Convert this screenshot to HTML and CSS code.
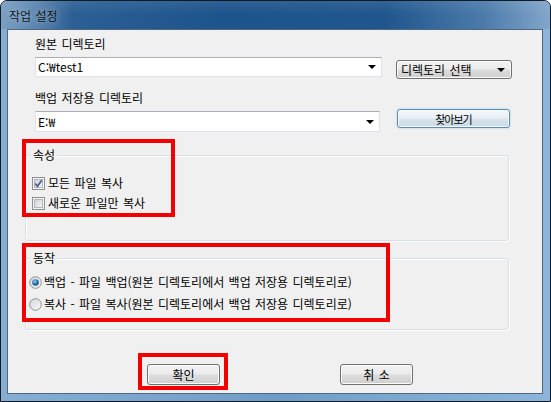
FILE: index.html
```html
<!DOCTYPE html>
<html lang="ko">
<head>
<meta charset="utf-8">
<title>작업 설정</title>
<link rel="stylesheet" href="styles.css">
</head>
<body>
<div class="window">
  <div class="titlebar"><span class="title">작업 설정</span></div>
  <div class="frame">
    <div class="client">
      <div class="label first">원본 디렉토리</div>
      <div class="row row1">
        <div class="combo combo1"><span class="value">C:₩test1</span><span class="arrow"></span></div>
        <div class="btn dropbtn"><span>디렉토리 선택</span><span class="arrow"></span></div>
      </div>
      <div class="label second">백업 저장용 디렉토리</div>
      <div class="row row2">
        <div class="combo combo2"><span class="value">E:₩</span><span class="arrow"></span></div>
        <div class="btn browse"><span class="tight">찾아보기</span></div>
      </div>

      <div class="group group1">
        <div class="legend">속성</div>
        <div class="checks">
          <div class="opt check">
            <svg width="13" height="13" viewBox="0 0 13 13">
              <defs><linearGradient id="cb1" x1="0" y1="0" x2="1" y2="1"><stop offset="0" stop-color="#cbcfd5"/><stop offset="1" stop-color="#f7f7f7"/></linearGradient></defs>
              <rect x="0.5" y="0.5" width="12" height="12" fill="#f5f5f5" stroke="#8e8f8f"/>
              <rect x="2.5" y="2.5" width="8" height="8" fill="url(#cb1)" stroke="#b0b5bb"/>
              <path d="M3.3 6.4 L5.4 9.2 L9.8 3.2" fill="none" stroke="#4a5f94" stroke-width="1.7"/>
            </svg>
            <span>모든 파일 복사</span>
          </div>
          <div class="opt check">
            <svg width="13" height="13" viewBox="0 0 13 13">
              <defs><linearGradient id="cb2" x1="0" y1="0" x2="1" y2="1"><stop offset="0" stop-color="#cbcfd5"/><stop offset="1" stop-color="#f7f7f7"/></linearGradient></defs>
              <rect x="0.5" y="0.5" width="12" height="12" fill="#f5f5f5" stroke="#8e8f8f"/>
              <rect x="2.5" y="2.5" width="8" height="8" fill="url(#cb2)" stroke="#b0b5bb"/>
            </svg>
            <span>새로운 파일만 복사</span>
          </div>
        </div>
      </div>

      <div class="group group2">
        <div class="legend">동작</div>
        <div class="radios">
          <div class="opt radio">
            <svg width="13" height="13" viewBox="0 0 13 13">
              <defs>
                <linearGradient id="rb1" x1="0" y1="0" x2="1" y2="1"><stop offset="0" stop-color="#d2d5d9"/><stop offset="1" stop-color="#fbfbfb"/></linearGradient>
                <radialGradient id="rd1" cx="0.4" cy="0.35" r="0.7"><stop offset="0" stop-color="#9fd6f8"/><stop offset="0.5" stop-color="#2f7ab8"/><stop offset="1" stop-color="#17487a"/></radialGradient>
              </defs>
              <circle cx="6.5" cy="6.5" r="5.8" fill="url(#rb1)" stroke="#8e8f8f"/>
              <circle cx="6.5" cy="6.5" r="3.3" fill="url(#rd1)"/>
            </svg>
            <span>백업 - 파일 백업(원본 디렉토리에서 백업 저장용 디렉토리로)</span>
          </div>
          <div class="opt radio">
            <svg width="13" height="13" viewBox="0 0 13 13">
              <defs><linearGradient id="rb2" x1="0" y1="0" x2="1" y2="1"><stop offset="0" stop-color="#d2d5d9"/><stop offset="1" stop-color="#fbfbfb"/></linearGradient></defs>
              <circle cx="6.5" cy="6.5" r="5.8" fill="url(#rb2)" stroke="#8e8f8f"/>
            </svg>
            <span>복사 - 파일 복사(원본 디렉토리에서 백업 저장용 디렉토리로)</span>
          </div>
        </div>
      </div>

      <div class="buttons">
        <div class="btn push ok">확인</div>
        <div class="btn push cancel">취 소</div>
      </div>

      <div class="mark mark1"></div>
      <div class="mark mark2"></div>
      <div class="mark mark3"></div>
    </div>
  </div>
</div>
</body>
</html>
```

FILE: styles.css
```css
* { box-sizing: border-box; }
html, body { margin: 0; padding: 0; }
body {
  width: 551px;
  height: 402px;
  overflow: hidden;
  background: #ffffff;
  font-family: "Noto Sans CJK KR", "Dotum", sans-serif;
  font-size: 12px;
  word-spacing: 1px;
  color: #000;
}
.window {
  width: 551px;
  height: 402px;
  border: 1px solid #111b26;
  border-radius: 7px 7px 0 0;
  overflow: hidden;
  display: flex;
  flex-direction: column;
  background: #7fa9cf;
}
.titlebar {
  height: 28px;
  flex: none;
  padding: 8px 0 0 8px;
  background:
    linear-gradient(180deg, rgba(255,255,255,0.08) 0%, rgba(255,255,255,0) 50%),
    linear-gradient(90deg, #7c9fc3 0%, #5d86b0 6%, #2c5f94 13%, #1d548c 40%, #20568d 70%, #4c7bab 88%, #82a6c9 100%);
}
.title {
  display: block;
  line-height: 14px;
  font-size: 12px;
  color: #101820;
  text-shadow: 0 0 6px rgba(255,255,255,0.55);
}
.frame {
  flex: 1;
  display: flex;
  padding: 0 7px 7px 6px;
  background: linear-gradient(90deg, #86aed3 0%, #6f9cc7 50%, #8db5d9 100%);
}
.client {
  position: relative;
  flex: 1;
  background: #f0f0f0;
  border: 1px solid #51697f;
}
.label {
  line-height: 14px;
  margin-left: 27px;
}
.label.first { margin-top: 7px; }
.label.second { margin-top: 12px; }
.row {
  display: flex;
  align-items: flex-start;
  margin-top: 6px;
  margin-left: 27px;
}
.combo {
  position: relative;
  display: flex;
  align-items: center;
  background: #fff;
  border: 1px solid #dfe3e8;
  border-top-color: #abadb3;
  padding-left: 2px;
}
.combo1 { width: 347px; height: 20px; }
.combo2 { width: 345px; height: 21px; }
.value { line-height: 14px; }
.arrow {
  margin-left: auto;
  width: 0;
  height: 0;
  border-left: 4px solid transparent;
  border-right: 4px solid transparent;
  border-top: 4px solid #000;
}
.combo .arrow { margin-right: 5px; }
.btn {
  display: flex;
  align-items: center;
  justify-content: center;
  border: 1px solid #707070;
  border-radius: 3px;
  box-shadow: inset 0 0 0 1px #fbfbfb;
  background: linear-gradient(180deg, #f2f2f2 0%, #ebebeb 48%, #dddddd 52%, #cfcfcf 100%);
  line-height: 14px;
}
.dropbtn {
  width: 116px;
  height: 19px;
  margin-left: 14px;
  margin-top: 3px;
  justify-content: flex-start;
  padding-left: 4px;
}
.dropbtn .arrow { margin-right: 6px; }
.browse {
  width: 113px;
  height: 19px;
  margin-left: 17px;
  margin-top: -2px;
  border-color: #5b8db6;
  box-shadow: inset 0 0 0 1px #f4f9fc, 0 0 2px rgba(120,190,230,0.7);
  background: linear-gradient(180deg, #f3f7fa 0%, #e9f0f5 48%, #d9e4ec 52%, #cbdae6 100%);
}
.tight { font-size: 11px; letter-spacing: -1px; }
.group {
  border: 1px solid #d5dfe5;
  border-radius: 3px;
  box-shadow: inset 1px 1px 0 #ffffff, 1px 1px 0 #ffffff;
  margin-left: 17px;
  width: 484px;
}
.group1 { margin-top: 23px; height: 86px; }
.group2 { margin-top: 17px; height: 72px; }
.legend {
  width: fit-content;
  margin: -8px 0 0 5px;
  padding: 0 2px;
  line-height: 14px;
  background: #f0f0f0;
}
.opt {
  display: flex;
  align-items: center;
  height: 20px;
}
.opt svg { flex: none; display: block; }
.checks { margin-top: 11px; padding-left: 6px; }
.check { gap: 3px; }
.radios { margin-top: 7px; padding-left: 3px; display: flex; flex-direction: column; gap: 2px; }
.radio { gap: 2px; }
.opt span { line-height: 14px; }
.buttons {
  display: flex;
  margin-top: 34px;
  margin-left: 139px;
}
.push {
  width: 73px;
  height: 21px;
}
.cancel { margin-left: 120px; }
.mark {
  position: absolute;
  border: 4px solid #f20000;
}
.mark1 { left: 14px; top: 109px; width: 153px; height: 78px; }
.mark2 { left: 14px; top: 213px; width: 368px; height: 79px; }
.mark3 { left: 130px; top: 323px; width: 90px; height: 37px; }
```
